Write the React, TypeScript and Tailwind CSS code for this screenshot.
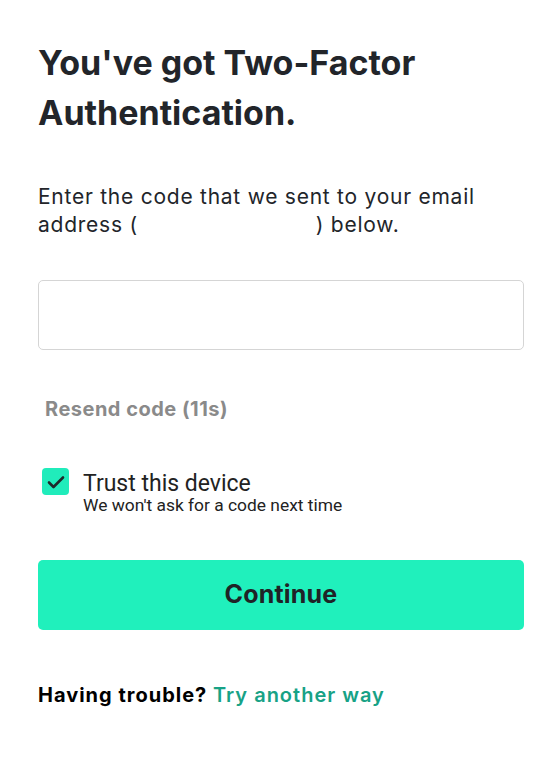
import React from 'react';

export default function App() {
  return (
    <div className="min-h-[773px] w-[560px] bg-white px-[38px] pt-[38px] font-['Inter',sans-serif]">
      <h1 className="text-[34px] font-bold leading-[50px] tracking-[0px] text-[#22252a]">
        You've got Two-Factor Authentication.
      </h1>

      <p className="mt-[45px] text-[21px] leading-[28px] tracking-[0.75px] text-[#22252a]">
        Enter the code that we sent to your email
        <br />
        address (<span className="inline-block w-[178px]"></span>) below.
      </p>

      <input
        type="text"
        className="mt-[41px] block h-[70px] w-[486px] rounded-[5px] border border-[#d5d5d5] bg-white px-4 text-[20px] outline-none"
      />

      <div className="mt-[44px] pl-[7px] text-[20px] font-bold tracking-[0.5px] text-[#8a8a8a]">Resend code (11s)</div>

      <label className="mt-[43px] flex items-start gap-[14px] pl-[4px] font-['Roboto',sans-serif]">
        <span className="mt-[1px] flex h-[27px] w-[27px] shrink-0 items-center justify-center rounded-[4px] bg-[#20ecbb]">
          <svg width="18" height="14" viewBox="0 0 18 14" fill="none">
            <path d="M2 7.5L6.5 12L16 2.5" stroke="#1e2a2a" strokeWidth="2.6" strokeLinecap="round" strokeLinejoin="round" />
          </svg>
        </span>
        <span className="flex flex-col pt-[5px]">
          <span className="text-[23px] leading-[23px] text-[#222]">Trust this device</span>
          <span className="text-[17.4px] leading-[20px] text-[#222]">We won't ask for a code next time</span>
        </span>
      </label>

      <button className="mt-[45px] flex h-[70px] w-[486px] items-center justify-center rounded-[5px] bg-[#20f0bc] text-[25px] font-bold tracking-[0.2px] text-[#1f2326]">
        Continue
      </button>

      <div className="mt-[50px] text-[20px] font-bold tracking-[1px] text-black">
        Having trouble? <span className="font-semibold text-[#17a286]">Try another way</span>
      </div>
    </div>
  );
}
